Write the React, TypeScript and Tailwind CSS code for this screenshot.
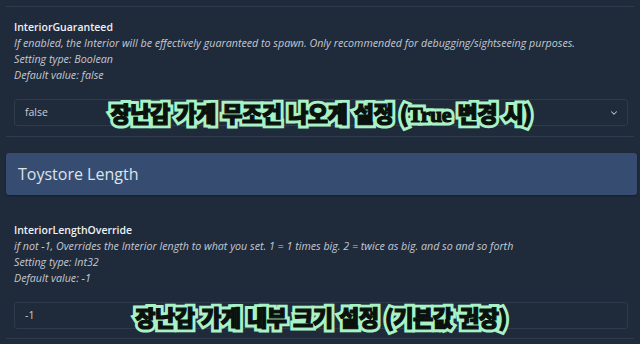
import { ChevronDown } from "lucide-react";

function Caption({ children }: { children: React.ReactNode }) {
  const base =
    "whitespace-nowrap text-[22px] font-black leading-none tracking-[-0.5px] [word-spacing:2px] font-['Noto_Sans_CJK_KR',sans-serif]";
  return (
    <div className="pointer-events-none absolute left-1/2 top-1/2 -translate-x-1/2 -translate-y-1/2">
      <div
        className={`${base} text-[#a9f2c6] [-webkit-text-stroke:7px_#a9f2c6] [text-shadow:0_0_2px_#07100b,0_0_1px_#07100b]`}
      >
        {children}
      </div>
      <div className={`${base} absolute inset-0 text-[#0b120e] [-webkit-text-stroke:1.2px_#0b120e]`}>
        {children}
      </div>
    </div>
  );
}

function Setting({
  name,
  desc,
  type,
  def,
}: {
  name: string;
  desc: string;
  type: string;
  def: string;
}) {
  return (
    <div className="pl-2 text-[10.7px] leading-[16px]">
      <div className="text-[10.5px] font-semibold text-[#eef1f5]">{name}</div>
      <div className="italic text-[#c3c9d2]">
        <div>{desc}</div>
        <div>Setting type: {type}</div>
        <div>Default value: {def}</div>
      </div>
    </div>
  );
}

export default function App() {
  return (
    <div className="h-[344px] w-[640px] overflow-hidden bg-[#1f2a3b] px-1.5 pt-1.5 font-['Open_Sans',sans-serif]">
      <div className="border-t border-[#2f3b4c] pt-3">
        <Setting
          name="InteriorGuaranteed"
          desc="If enabled, the Interior will be effectively guaranteed to spawn. Only recommended for debugging/sightseeing purposes."
          type="Boolean"
          def="false"
        />
        <div className="relative ml-2 mr-1.5 mt-4 flex h-[27px] items-center justify-between rounded-[3px] border border-[#2f3b4c] bg-[#1f2a3b] pl-2.5 pr-2 text-[10.5px] text-[#c9ced6]">
          <span>false</span>
          <ChevronDown size={10} strokeWidth={2.5} className="text-[#c3c9d2]" />
          <Caption>
            장난감 가게 무조건 나오게 설정 (<span className="font-['Liberation_Serif',serif]">True</span> 변경 시)
          </Caption>
        </div>
      </div>

      <div className="mt-[10px] border-t border-[#2f3b4c] pt-4">
        <div className="-mr-[3px] flex h-[42px] items-center rounded-[3px] bg-[#364d71] px-3 text-[16px] text-[#dde3ea] shadow-[0_1px_2px_rgba(0,0,0,0.3)]">
          Toystore Length
        </div>
        <div className="mt-[27px]">
          <Setting
            name="InteriorLengthOverride"
            desc="if not -1, Overrides the Interior length to what you set. 1 = 1 times big. 2 = twice as big. and so and so forth"
            type="Int32"
            def="-1"
          />
        </div>
        <div className="relative ml-2 mr-1.5 mt-4 flex h-[27px] items-center rounded-[3px] border border-[#2f3b4c] pl-2.5 text-[10.5px] text-[#c9ced6]">
          <span>-1</span>
          <Caption>장난감 가게 내부 크기 설정 (기본값 권장)</Caption>
        </div>
        <div className="mt-[9px] border-t border-[#2f3b4c]" />
      </div>
    </div>
  );
}
